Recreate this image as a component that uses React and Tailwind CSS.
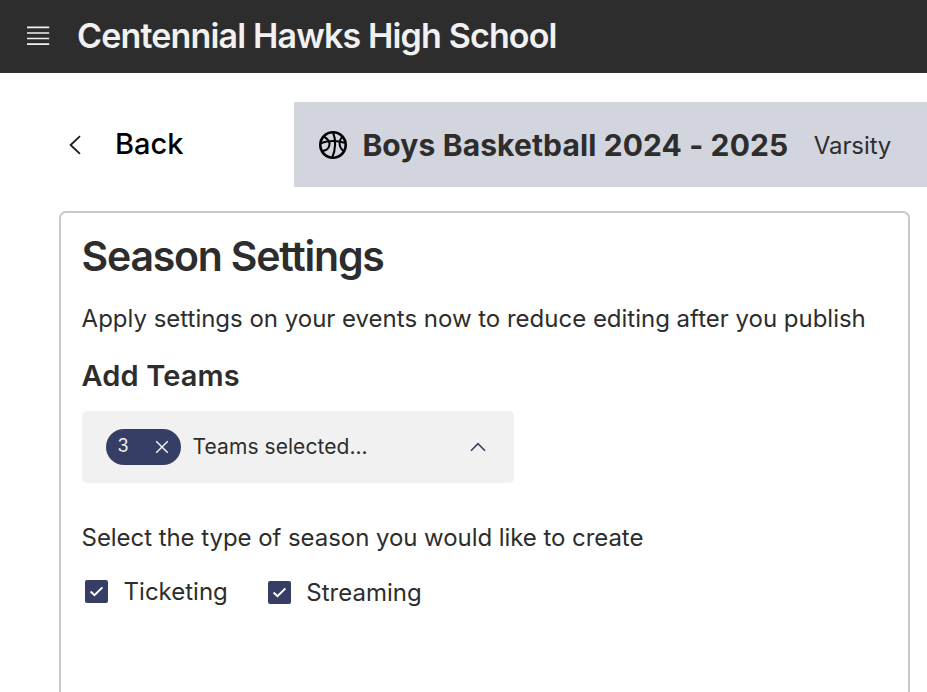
function MenuIcon() {
  return (
    <svg className="mb-[2px] ml-[26px] h-[24px] w-[24px] shrink-0" viewBox="0 0 24 24" fill="none" stroke="#f1f1f1" strokeWidth="1.7">
      <path d="M1 3.3H23.2M1 9H23.2M1 14.5H23.2M1 20.2H23.2" />
    </svg>
  );
}

function BallIcon() {
  return (
    <svg className="mt-[1.5px] h-[28px] w-[28px] shrink-0" viewBox="0 0 28 28" fill="none" stroke="#000" strokeWidth="2">
      <circle cx="14" cy="14" r="12.7" strokeWidth="2.6" />
      <path d="M14 1.5C17 8 16.8 19 13.2 26.5" />
      <path d="M1.5 12.2C9 9.6 18 9.3 26.5 12" />
      <path d="M4.5 5.5C8 7 11.5 10.5 10.3 14.5C9.5 18 6.5 19.8 2.8 20" />
      <path d="M23.8 5.8C19.5 9 19.3 16.5 24.8 20.3" />
    </svg>
  );
}

function Checkbox() {
  return (
    <span className="flex h-[23px] w-[23px] shrink-0 items-center justify-center rounded-[2px] bg-[#363e65]">
      <svg className="h-[23px] w-[23px]" viewBox="0 0 23 23" fill="none" stroke="#fff" strokeWidth="2">
        <path d="M5.6 11.6L9.5 15.2L17.4 7.4" />
      </svg>
    </span>
  );
}

export default function App() {
  return (
    <div className="flex h-[692px] w-[927px] flex-col overflow-hidden bg-white font-['Inter',sans-serif] text-[#2d2d2d]">
      <header className="flex h-[73px] shrink-0 items-center bg-[#2d2d2d]">
        <MenuIcon />
        <h1 className="mb-[2px] ml-[27px] text-[34px] leading-[40px] font-semibold tracking-[-0.84px] whitespace-nowrap text-[#f1f1f1]">
          Centennial Hawks High School
        </h1>
      </header>
      <div className="mt-[28.5px] flex h-[85.5px] shrink-0">
        <button className="flex w-[294.4px] shrink-0 items-center pl-[68px] text-[29px] leading-[36px] font-medium text-black">
          <svg className="mt-[2px] h-[20px] w-[14px]" viewBox="0 0 14 20" fill="none" stroke="#1c1c1c" strokeWidth="1.8">
            <path d="M12 1.2L2.6 10L12 18.8" />
          </svg>
          <span className="ml-[33px]">Back</span>
        </button>
        <div className="flex flex-1 items-center bg-[#d2d4de] pl-[24.5px] whitespace-nowrap">
          <BallIcon />
          <h2 className="mt-[1px] ml-[15.5px] text-[30px] leading-[36px] font-bold tracking-[0.12px]">Boys Basketball 2024 - 2025</h2>
          <span className="mt-[3px] ml-[25.5px] text-[24px] leading-[30px] tracking-[-0.1px]">Varsity</span>
        </div>
      </div>
      <main className="mt-[24px] ml-[59px] flex w-[851px] flex-1 flex-col items-start rounded-t-[7px] border-2 border-b-0 border-[#c9c9c9] pl-[20.6px] whitespace-nowrap">
        <h2 className="mt-[18px] text-[41px] leading-[50px] font-semibold tracking-[-1.22px]">Season Settings</h2>
        <p className="mt-[23px] text-[24px] leading-[30px] tracking-[-0.01px]">
          Apply settings on your events now to reduce editing after you publish
        </p>
        <h3 className="mt-[24px] text-[29px] leading-[36px] font-semibold tracking-[0.1px]">Add Teams</h3>
        <div className="mt-[17px] flex h-[72px] w-[432px] items-center rounded-[5px] bg-[#f1f1f1] pl-[24px]">
          <span className="flex h-[36px] w-[75px] items-center rounded-full bg-[#363e65] pl-[12px] text-[18px] leading-[22px] text-[#f1f1f1]">
            <span className="mb-[3px]">3</span>
            <svg className="ml-[26px] h-[14px] w-[14px]" viewBox="0 0 14 14" fill="none" stroke="#f1f1f1" strokeWidth="1.5">
              <path d="M1.2 1.2L12.8 12.8M12.8 1.2L1.2 12.8" />
            </svg>
          </span>
          <span className="ml-[12px] text-[21px] leading-[26px] tracking-[0.06px]">Teams selected...</span>
          <svg className="ml-auto mr-[28px] h-[10px] w-[16px]" viewBox="0 0 16 10" fill="none" stroke="#363e65" strokeWidth="1.6">
            <path d="M1 8.7L8 1.7L15 8.7" />
          </svg>
        </div>
        <p className="mt-[40px] text-[24px] leading-[30px] tracking-[-0.06px]">
          Select the type of season you would like to create
        </p>
        <div className="mt-[24px] ml-[3px] flex items-start text-[24px] leading-[30px]">
          <label className="flex items-center gap-[16px]">
            <span className="-mt-[2px]">
              <Checkbox />
            </span>
            Ticketing
          </label>
          <label className="mt-[1px] ml-[40px] flex items-center gap-[15.5px]">
            <span className="-mt-[2px]">
              <Checkbox />
            </span>
            Streaming
          </label>
        </div>
      </main>
    </div>
  );
}
